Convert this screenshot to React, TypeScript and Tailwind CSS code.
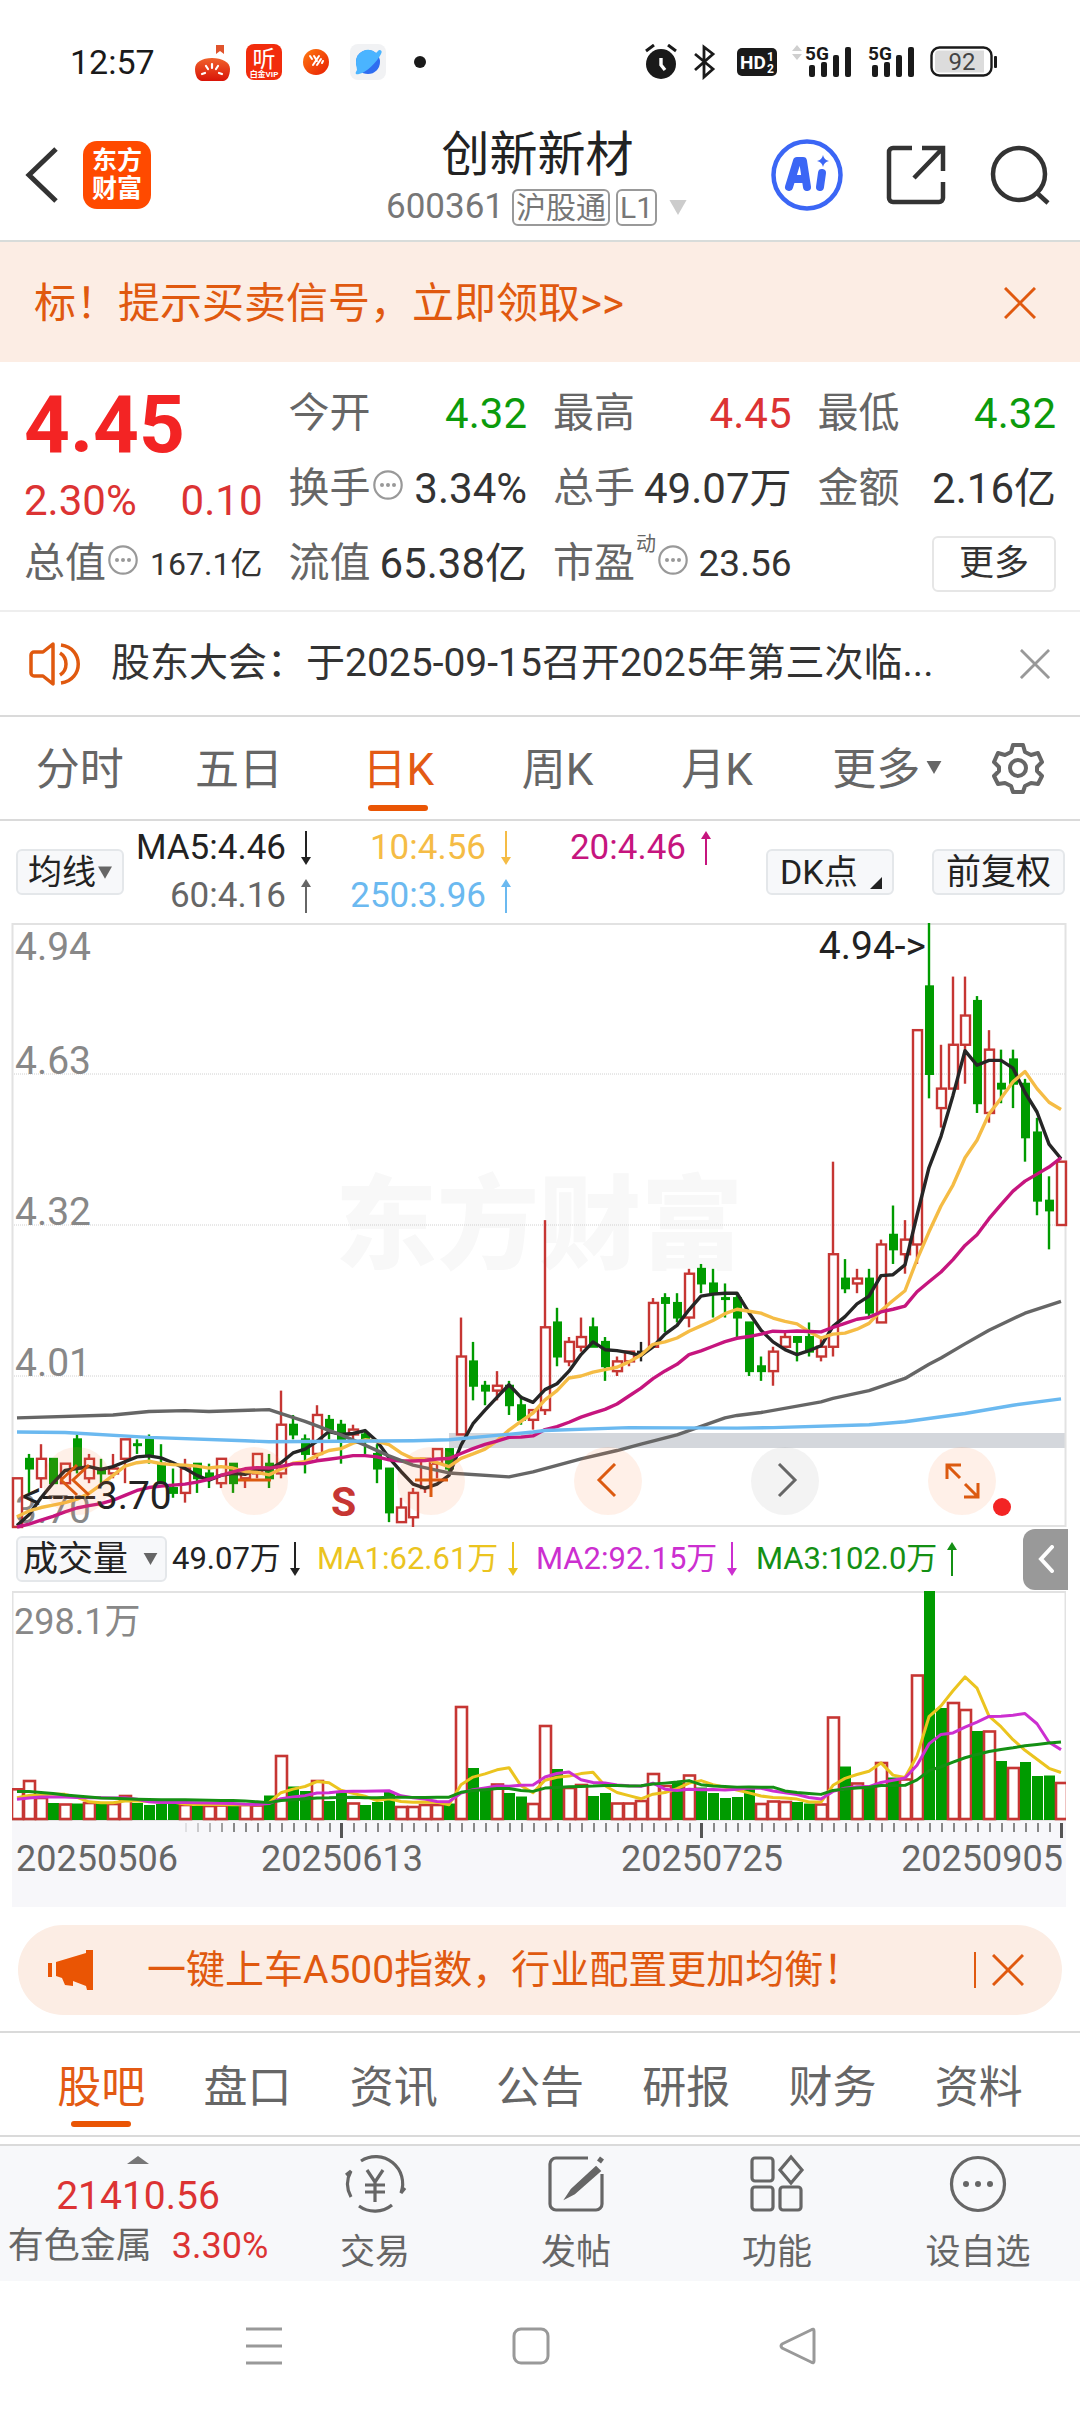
import React from 'react';

// open, high, low, close, volume bar height, volume colour flag (1 = up)
type Day = [number, number, number, number, number, number];

const days: Day[] = [
  [3.7, 3.8, 3.7, 3.8, 31.7, 1],
  [3.84, 3.85, 3.77, 3.82, 40, 1],
  [3.8, 3.87, 3.78, 3.84, 23, 1],
  [3.84, 3.84, 3.79, 3.79, 17, 0],
  [3.79, 3.83, 3.79, 3.83, 16.5, 1],
  [3.88, 3.89, 3.81, 3.82, 16.5, 0],
  [3.8, 3.85, 3.79, 3.84, 18, 1],
  [3.82, 3.84, 3.79, 3.81, 18, 0],
  [3.81, 3.85, 3.8, 3.82, 17, 1],
  [3.84, 3.88, 3.79, 3.88, 25, 1],
  [3.87, 3.88, 3.85, 3.87, 17, 0],
  [3.88, 3.89, 3.83, 3.85, 15, 0],
  [3.83, 3.87, 3.79, 3.79, 16, 0],
  [3.78, 3.82, 3.76, 3.77, 16.5, 0],
  [3.77, 3.84, 3.75, 3.82, 16, 1],
  [3.83, 3.83, 3.77, 3.8, 14, 0],
  [3.81, 3.83, 3.78, 3.8, 15, 1],
  [3.79, 3.84, 3.78, 3.84, 15.5, 1],
  [3.83, 3.83, 3.77, 3.79, 15.5, 0],
  [3.8, 3.81, 3.78, 3.81, 16, 1],
  [3.81, 3.85, 3.8, 3.85, 15.5, 1],
  [3.83, 3.85, 3.78, 3.8, 24.5, 0],
  [3.81, 3.98, 3.8, 3.91, 65, 1],
  [3.91, 3.93, 3.88, 3.89, 33.5, 0],
  [3.88, 3.89, 3.81, 3.85, 29, 0],
  [3.85, 3.95, 3.84, 3.93, 40, 1],
  [3.92, 3.93, 3.88, 3.9, 19, 0],
  [3.91, 3.92, 3.83, 3.88, 27.5, 0],
  [3.89, 3.91, 3.88, 3.9, 17.5, 1],
  [3.89, 3.9, 3.85, 3.88, 15, 0],
  [3.85, 3.87, 3.79, 3.82, 18, 0],
  [3.82, 3.82, 3.71, 3.73, 28, 0],
  [3.71, 3.76, 3.71, 3.74, 14, 1],
  [3.72, 3.78, 3.7, 3.77, 14, 1],
  [3.78, 3.84, 3.77, 3.84, 16, 1],
  [3.83, 3.86, 3.8, 3.86, 16, 1],
  [3.86, 3.86, 3.81, 3.82, 16.5, 0],
  [3.89, 4.13, 3.89, 4.05, 114, 1],
  [4.04, 4.08, 3.96, 3.99, 52, 0],
  [3.99, 4.0, 3.95, 3.98, 32, 0],
  [3.98, 4.02, 3.96, 3.99, 36.5, 1],
  [3.99, 4.0, 3.93, 3.95, 27, 0],
  [3.95, 3.97, 3.91, 3.92, 23.5, 0],
  [3.92, 3.94, 3.9, 3.94, 17, 1],
  [3.94, 4.33, 3.93, 4.11, 95, 1],
  [4.12, 4.15, 4.03, 4.05, 51, 0],
  [4.04, 4.09, 4.03, 4.08, 33, 1],
  [4.07, 4.13, 4.06, 4.09, 36, 1],
  [4.11, 4.13, 4.07, 4.07, 24, 0],
  [4.08, 4.09, 4.0, 4.03, 27, 0],
  [4.02, 4.05, 4.01, 4.04, 17.5, 1],
  [4.04, 4.06, 4.03, 4.06, 17.5, 1],
  [4.06, 4.08, 4.04, 4.06, 20, 1],
  [4.07, 4.17, 4.07, 4.16, 47, 1],
  [4.17, 4.18, 4.1, 4.16, 35, 1],
  [4.16, 4.18, 4.12, 4.13, 37, 0],
  [4.13, 4.23, 4.11, 4.22, 45.5, 1],
  [4.23, 4.24, 4.18, 4.2, 32.5, 0],
  [4.2, 4.23, 4.13, 4.18, 27, 0],
  [4.17, 4.2, 4.13, 4.17, 22, 0],
  [4.17, 4.18, 4.09, 4.13, 23, 0],
  [4.12, 4.12, 4.01, 4.02, 31, 0],
  [4.03, 4.05, 4.0, 4.02, 17, 1],
  [4.02, 4.07, 3.99, 4.06, 19.5, 1],
  [4.07, 4.1, 4.07, 4.09, 19, 1],
  [4.09, 4.09, 4.04, 4.08, 18, 0],
  [4.09, 4.12, 4.05, 4.06, 16.5, 0],
  [4.05, 4.09, 4.04, 4.07, 16.5, 1],
  [4.07, 4.45, 4.05, 4.26, 103.5, 1],
  [4.21, 4.25, 4.18, 4.19, 53.5, 0],
  [4.2, 4.23, 4.18, 4.21, 37.5, 1],
  [4.21, 4.23, 4.13, 4.14, 33, 0],
  [4.12, 4.29, 4.12, 4.28, 58, 1],
  [4.3, 4.36, 4.24, 4.27, 42.5, 0],
  [4.26, 4.33, 4.22, 4.29, 41.5, 1],
  [4.28, 4.72, 4.24, 4.72, 145.5, 1],
  [4.81, 4.94, 4.58, 4.63, 229, 0],
  [4.56, 4.69, 4.52, 4.6, 112, 0],
  [4.6, 4.83, 4.6, 4.69, 118, 1],
  [4.69, 4.83, 4.61, 4.75, 111, 1],
  [4.78, 4.79, 4.55, 4.57, 89, 0],
  [4.55, 4.72, 4.53, 4.68, 89.5, 1],
  [4.61, 4.68, 4.57, 4.6, 59, 0],
  [4.66, 4.68, 4.56, 4.61, 53, 1],
  [4.61, 4.62, 4.45, 4.5, 58, 0],
  [4.51, 4.54, 4.34, 4.37, 44, 0],
  [4.37, 4.42, 4.27, 4.35, 44.5, 0],
  [4.32, 4.45, 4.32, 4.45, 38, 1],
];

// open equals close on these days
const DOJI = 52;
const GREEN_DOJI = [10, 59];

const RED = '#c63633';
const GREEN = '#009b00';

const xAt = (i: number) => 5 + i * 12;
const yAt = (p: number) => 604 - (p - 3.7) * 487.1;

// averages before the window is long enough come from the lead values
const average = (values: number[], n: number, lead: number[]) =>
  values.map((_, i) =>
    i < n - 1 ? lead[i] : values.slice(i - n + 1, i + 1).reduce((a, b) => a + b, 0) / n
  );

const closes = days.map((d) => d[3]);
const volumes = days.map((d) => d[4]);

const ma5 = average(closes, 5, [3.703, 3.725, 3.76, 3.79]);
const ma10 = average(closes, 10, [3.721, 3.733, 3.74, 3.745, 3.75, 3.757, 3.769, 3.787, 3.806]);
const ma20 = average(closes, 20, [
  3.7, 3.706, 3.714, 3.722, 3.731, 3.739, 3.744, 3.748, 3.755, 3.765, 3.775, 3.781, 3.784, 3.786,
  3.788, 3.792, 3.798, 3.806, 3.813,
]);
const ma60: [number, number][] = [
  [0, 3.924], [8, 3.93], [11, 3.937], [14, 3.939], [16, 3.937], [21, 3.941], [24, 3.917],
  [27, 3.889], [29, 3.868], [31, 3.846], [33, 3.827], [36, 3.811], [41, 3.803], [43, 3.813],
  [47, 3.84], [50, 3.857], [52, 3.87], [55, 3.889], [59, 3.924], [60, 3.929], [62, 3.935],
  [67, 3.957], [68, 3.964], [71, 3.98], [74, 4.005], [76, 4.034], [77, 4.047], [79, 4.076],
  [81, 4.104], [84, 4.139], [87, 4.163],
];
const ma250: [number, number][] = [
  [0, 3.895], [4, 3.894], [11, 3.884], [19, 3.877], [21, 3.875], [33, 3.877], [36, 3.879],
  [43, 3.895], [44, 3.898], [51, 3.904], [60, 3.903], [63, 3.904], [71, 3.91], [74, 3.916],
  [79, 3.933], [83, 3.95], [87, 3.963],
];

const vol5 = average(volumes, 5, [22.3, 24.5, 25, 26]);
const vol10 = average(volumes, 10, [20.7, 22, 23, 23, 23, 22.5, 22.3, 22.2, 22]);
const vol20 = average(volumes, 20, [
  28.5, 28.5, 27.5, 26.5, 25, 24, 23, 22, 21.7, 21.3, 20.8, 20.5, 20.3, 20.2, 20.2, 20, 19.8, 19.5,
  19.4,
]);

const priceLine = (values: number[]) => values.map((v, i) => `${xAt(i)},${yAt(v)}`).join(' ');
const pointLine = (points: [number, number][]) =>
  points.map(([i, v]) => `${xAt(i)},${yAt(v)}`).join(' ');
const volumeLine = (values: number[]) => values.map((v, i) => `${xAt(i)},${229 - v}`).join(' ');

const Candle = ({ day, i }: { day: Day; i: number }) => {
  const [open, high, low, close] = day;
  const x = xAt(i);
  const up = close >= open && !GREEN_DOJI.includes(i);
  const top = yAt(Math.max(open, close));
  const bottom = yAt(Math.min(open, close));
  const colour = i === DOJI ? '#222' : up ? RED : GREEN;
  return (
    <g stroke={colour} strokeWidth={2.4} fill={colour}>
      <line x1={x} x2={x} y1={yAt(high)} y2={top} />
      <line x1={x} x2={x} y1={bottom} y2={yAt(low)} />
      {up && i !== DOJI ? (
        <rect x={x - 4} y={top} width={9} height={Math.max(bottom - top, 2)} fill="none" />
      ) : (
        <rect x={x - 4} y={top - 1} width={9} height={Math.max(bottom - top + 2, 3)} stroke="none" />
      )}
    </g>
  );
};

const PriceChart = () => (
  <svg viewBox="0 0 1054 604" className="block h-auto w-full overflow-visible">
    <text x={527} y={338} fontSize={102} fontWeight={900} fill="#f8f8f8" textAnchor="middle">
      东方财富
    </text>
    {[151, 302, 453].map((y) => (
      <line key={y} x1={0} x2={1054} y1={y} y2={y} stroke="#d0d0d0" strokeDasharray="1 1" />
    ))}
    <rect x={437} y={510} width={617} height={15} fill="#d4d7dc" />
    <rect x={0.5} y={1} width={1053} height={602} fill="none" stroke="#e2e2e2" strokeWidth={2} />
    <g fontSize={39} fill="#888">
      <text x={3} y={37}>4.94</text>
      <text x={3} y={151}>4.63</text>
      <text x={3} y={302}>4.32</text>
      <text x={3} y={453}>4.01</text>
      <text x={3} y={600}>3.70</text>
    </g>
    {days.map((day, i) => (
      <Candle key={i} day={day} i={i} />
    ))}
    <g fill="none" strokeWidth={3.4} strokeLinejoin="round">
      <polyline points={priceLine(ma5)} stroke="#262626" />
      <polyline points={priceLine(ma10)} stroke="#f5bc45" />
      <polyline points={priceLine(ma20)} stroke="#c6157e" />
      <polyline points={pointLine(ma60)} stroke="#666" />
      <polyline points={pointLine(ma250)} stroke="#6bb9f0" />
    </g>
    <text x={914} y={36} fontSize={39} fill="#222" textAnchor="end">4.94-&gt;</text>
    <text x={10} y={586} fontSize={39} fill="#222">&lt;-----3.70</text>
    <text x={319} y={593} fontSize={41} fontWeight={700} fill={RED}>S</text>
  </svg>
);

const VolumeChart = () => (
  <svg viewBox="0 0 1054 230" className="block h-auto w-full">
    <rect x={0.5} y={1} width={1053} height={228} fill="none" stroke="#e2e2e2" strokeWidth={2} />
    <text x={2} y={43} fontSize={36} fill="#888">298.1万</text>
    {days.map(([, , , , v, up], i) =>
      up ? (
        <rect key={i} x={xAt(i) - 5} y={230 - v} width={11} height={v - 2} fill="#fff" stroke={RED} strokeWidth={2.6} />
      ) : (
        <rect key={i} x={xAt(i) - 5} y={229 - v} width={11} height={v} fill={GREEN} />
      )
    )}
    <g fill="none" strokeWidth={3} strokeLinejoin="round">
      <polyline points={volumeLine(vol5)} stroke="#ebc41f" />
      <polyline points={volumeLine(vol10)} stroke="#cc2fd0" />
      <polyline points={volumeLine(vol20)} stroke="#149014" />
    </g>
  </svg>
);

const DateAxis = () => (
  <svg viewBox="0 0 1054 86" className="block h-auto w-full bg-[#f7f7fa]">
    {days.map((_, i) => {
      if (i < 14) return null;
      const major = i === 27 || i === 57 || i === 87;
      return (
        <rect
          key={i}
          x={xAt(i) - (major ? 1 : 0)}
          y={2}
          width={major ? 3 : 2}
          height={major ? 15 : 9}
          fill={major ? '#555' : '#888'}
          opacity={i < 18 ? (i - 13) / 5 : 1}
        />
      );
    })}
    <g fontSize={36} fill="#666">
      <text x={4} y={50}>20250506</text>
      <text x={330} y={50} textAnchor="middle">20250613</text>
      <text x={690} y={50} textAnchor="middle">20250725</text>
      <text x={1051} y={50} textAnchor="end">20250905</text>
    </g>
  </svg>
);

const Arrow = ({ up = false }: { up?: boolean }) => (
  <svg viewBox="0 0 14 34" className="h-[34px] w-[14px] shrink-0" fill="currentColor">
    {up ? <path d="M6 34V8H2L7 0l5 8H8v26z" /> : <path d="M6 0v26H2l5 8 5-8H8V0z" />}
  </svg>
);

const Close = ({ className }: { className: string }) => (
  <svg viewBox="0 0 32 32" className={className} fill="none" stroke="currentColor" strokeWidth={3}>
    <path d="M1 1l30 30M31 1L1 31" />
  </svg>
);

const Caret = ({ className }: { className: string }) => (
  <svg viewBox="0 0 16 14" className={className} fill="currentColor">
    <path d="M0 0h16L8 14z" />
  </svg>
);

const More = () => (
  <svg viewBox="0 0 30 30" className="mb-[8px] ml-[2px] h-[30px] w-[30px] shrink-0" fill="none" stroke="#999" strokeWidth={2.2}>
    <circle cx={15} cy={15} r={13.7} />
    <g fill="#999" stroke="none">
      <circle cx={9} cy={15} r={2} />
      <circle cx={15} cy={15} r={2} />
      <circle cx={21} cy={15} r={2} />
    </g>
  </svg>
);

const Signal = () => (
  <svg viewBox="0 0 48 34" className="h-[34px] w-[48px] overflow-visible" fill="#1a1a1a">
    <text x={0} y={15} fontSize={19} fontWeight={700}>5G</text>
    <rect x={4} y={20} width={6} height={12} rx={2} />
    <rect x={16} y={17} width={6} height={15} rx={2} />
    <rect x={28} y={10} width={6} height={22} rx={2} />
    <rect x={40} y={2} width={6} height={30} rx={2} />
  </svg>
);

const StatusBar = () => (
  <div className="flex h-[124px] items-center pl-[70px] pr-[82px] text-[#1a1a1a]">
    <span className="w-[123px] text-[34px]">12:57</span>
    <svg viewBox="0 0 236 40" className="h-[40px] w-[236px]">
      <defs>
        <linearGradient id="tomato" x1="0" y1="0" x2="0" y2="1">
          <stop offset="0" stopColor="#f0622b" />
          <stop offset="1" stopColor="#d91408" />
        </linearGradient>
        <linearGradient id="ball" x1="0" y1="0" x2="1" y2="1">
          <stop offset="0" stopColor="#ff7a10" />
          <stop offset="1" stopColor="#e81d04" />
        </linearGradient>
      </defs>
      <path d="M23 3h8v9l-4-3-4 3z" fill="#e0532c" />
      <path d="M2 27C2 20 9 16 19 16s18 4 18 11c0 7-3 12-7 12H9c-4 0-7-5-7-12z" fill="url(#tomato)" />
      <path d="M19 22v4M13 24l2 3M25 24l-2 3M9 32l3-1M29 32l-3-1" stroke="#fff" strokeWidth={2.2} strokeLinecap="round" />
      <rect x={53} y={2} width={36} height={36} rx={8} fill="#f22c0c" />
      <text x={71} y={25} fontSize={23} fill="#fff" textAnchor="middle">听</text>
      <text x={71} y={35} fontSize={8} fontWeight={700} fill="#fff" textAnchor="middle">白金VIP</text>
      <circle cx={123} cy={20} r={13} fill="url(#ball)" />
      <path d="M117 14l2 3M121 14l3 5M120 23l6-9M124 23l4-6M129 21l1-2" stroke="#fff" strokeWidth={2} strokeLinecap="round" />
      <rect x={157} y={2} width={36} height={36} rx={8} fill="#f1f2f4" />
      <circle cx={175} cy={20} r={12} fill="#2f6df0" />
      <path d="M163 21a12 12 0 0 1 20-10l3-3q4 0 2 4C184 20 174 30 166 32c-4 1-4-1-2-4z" fill="#4ab4ff" />
      <circle cx={227} cy={20} r={6} fill="#1a1a1a" />
    </svg>
    <div className="ml-auto flex items-center">
      <svg viewBox="0 0 34 36" className="mr-[15px] h-[36px] w-[34px]">
        <circle cx={17} cy={20} r={15} fill="#1a1a1a" />
        <path d="M2 7l8-6M32 7l-8-6" stroke="#1a1a1a" strokeWidth={3} />
        <path d="M17 14v7l4 5" stroke="#fff" strokeWidth={3.4} fill="none" />
      </svg>
      <svg viewBox="0 0 24 36" className="mr-[20px] h-[36px] w-[24px]" fill="none" stroke="#1a1a1a" strokeWidth={2.8}>
        <path d="M2 10l18 15-9 8V3l9 7L2 26" />
      </svg>
      <svg viewBox="0 0 40 28" className="mr-[14px] h-[28px] w-[40px]">
        <rect width={40} height={28} rx={5} fill="#1a1a1a" />
        <text x={3} y={21} fontSize={19} fontWeight={700} fill="#fff">HD</text>
        <text x={30} y={13} fontSize={12} fontWeight={700} fill="#fff">1</text>
        <text x={30} y={25} fontSize={12} fontWeight={700} fill="#fff">2</text>
      </svg>
      <svg viewBox="0 0 12 34" className="mr-[2px] h-[34px] w-[12px]" fill="#cfcfcf">
        <path d="M1 6l5-6 5 6zM1 9h10l-5 6z" />
      </svg>
      <Signal />
      <span className="w-[15px]" />
      <Signal />
      <svg viewBox="0 0 68 32" className="ml-[14px] h-[32px] w-[68px]">
        <rect x={1.5} y={1.5} width={60} height={28} rx={8} fill="#fff" stroke="#1a1a1a" strokeWidth={2.4} />
        <path d="M9 4.500h45v22H9a4 4 0 0 1-4-4v-14a4 4 0 0 1 4-4z" fill="#dcdcdc" />
        <rect x={64} y={10} width={3} height={12} rx={1} fill="#1a1a1a" />
        <text x={32} y={24} fontSize={24} fill="#444" textAnchor="middle">92</text>
      </svg>
    </div>
  </div>
);

const Header = () => (
  <header className="flex h-[118px] items-center justify-between border-b-2 border-[#d8dcda] pl-[25px] pr-[30px] pb-[15px]">
    <div className="flex w-[306px] items-center gap-[24px]">
      <button aria-label="返回">
        <svg viewBox="0 0 34 56" className="h-[56px] w-[34px]" fill="none" stroke="#333" strokeWidth={5}>
          <path d="M31 2L4 28l27 26" />
        </svg>
      </button>
      <div className="flex h-[68px] w-[68px] flex-col items-center justify-center rounded-[14px] bg-[#ff4a00] text-[25px] font-bold leading-[28px] text-white">
        <span>东方</span>
        <span>财富</span>
      </div>
    </div>
    <div className="flex flex-col items-center pt-[4px]">
      <h1 className="text-[48px] leading-[62px] text-[#222]">创新新材</h1>
      <button className="flex h-[44px] items-center text-[#777]">
        <span className="mr-[8px] text-[35px]">600361</span>
        <span className="mr-[6px] rounded-[6px] border-2 border-[#999] px-[2px] text-[30px] leading-[33px]">沪股通</span>
        <span className="mr-[10px] rounded-[6px] border-2 border-[#999] px-[2px] text-[30px] leading-[33px]">L1</span>
        <Caret className="h-[15px] w-[22px] text-[#ccc]" />
      </button>
    </div>
    <div className="flex w-[306px] items-center justify-end">
      <button aria-label="AI" className="mr-[42px]">
        <svg viewBox="0 0 74 74" className="h-[74px] w-[74px]" fill="#3b66f5">
          <circle cx={37} cy={37} r={33.500} fill="none" stroke="#3b66f5" strokeWidth={4.500} />
          <g fill="none" stroke="#3b66f5" strokeWidth={8} strokeLinecap="round" strokeLinejoin="round">
            <path d="M19 49l8-26h6l4 26M24 41h10" />
            <path d="M52 35l-2 14" />
          </g>
          <path d="M53 17q1 5 6 6-5 1-6 6-1-5-6-6 5-1 6-6z" />
        </svg>
      </button>
      <button aria-label="分享" className="mr-[44px]">
        <svg viewBox="0 0 60 60" className="h-[60px] w-[60px]" fill="none" stroke="#333" strokeWidth={4.500}>
          <path d="M26 3H7a4 4 0 0 0-4 4v46a4 4 0 0 0 4 4h46a4 4 0 0 0 4-4V37" />
          <path d="M36 3h21v23M56 4L28 33" />
        </svg>
      </button>
      <button aria-label="搜索">
        <svg viewBox="0 0 60 60" className="h-[60px] w-[60px]" fill="none" stroke="#333" strokeWidth={4.500}>
          <circle cx={29} cy={29} r={26} />
          <path d="M47 48l11 10" />
        </svg>
      </button>
    </div>
  </header>
);

const Field = ({
  label,
  value,
  colour = 'text-[#333]',
  size = 'text-[42px]',
  info = false,
  mark,
}: {
  label: string;
  value: string;
  colour?: string;
  size?: string;
  info?: boolean;
  mark?: string;
}) => (
  <div className="flex h-[75px] items-center whitespace-nowrap">
    <span className="text-[41px] text-[#666]">{label}</span>
    {mark && <sup className="-mt-[20px] pl-[1px] text-[20px] text-[#666]">{mark}</sup>}
    {info && <More />}
    <span className={`ml-auto ${size} ${colour}`}>{value}</span>
  </div>
);

const Quote = () => (
  <section className="grid grid-cols-4 gap-[26px] border-b-2 border-[#eee] px-[24px] pb-[9px] pt-[14px]">
    <div>
      <div className="flex h-[98px] items-center text-[80px] font-bold text-[#f32424]">4.45</div>
      <div className="flex h-[52px] items-center justify-between text-[42px] text-[#dc3333]">
        <span>2.30%</span>
        <span>0.10</span>
      </div>
      <Field label="总值" value="167.1亿" size="text-[32px]" info />
    </div>
    <div>
      <Field label="今开" value="4.32" colour="text-[#0c9b0c]" />
      <Field label="换手" value="3.34%" info />
      <Field label="流值" value="65.38亿" />
    </div>
    <div>
      <Field label="最高" value="4.45" colour="text-[#dc3333]" />
      <Field label="总手" value="49.07万" />
      <Field label="市盈" value="23.56" size="text-[37px]" mark="动" info />
    </div>
    <div>
      <Field label="最低" value="4.32" colour="text-[#0c9b0c]" />
      <Field label="金额" value="2.16亿" />
      <div className="flex h-[75px] items-center justify-end">
        <button className="h-[56px] w-[124px] rounded-[6px] border-2 border-[#e6e6e6] text-[35px] leading-none text-[#333]">
          更多
        </button>
      </div>
    </div>
  </section>
);

const periods = ['分时', '五日', '日K', '周K', '月K', '更多'];

const PeriodTabs = () => (
  <nav className="flex h-[104px] border-b-2 border-[#dadada] text-[44px] text-[#666]">
    {periods.map((p) => (
      <button
        key={p}
        className={`relative flex flex-1 items-center justify-center pt-[4px] ${p === '日K' ? 'text-[#e35a14]' : ''}`}
      >
        {p}
        {p === '日K' && <span className="absolute bottom-[8px] h-[6px] w-[60px] rounded-full bg-[#ea5504]" />}
        {p === '更多' && <Caret className="absolute right-[14px] top-[44px] h-[13px] w-[16px]" />}
      </button>
    ))}
    <button aria-label="设置" className="flex w-[124px] items-center justify-center">
      <svg viewBox="0 0 52 52" className="h-[52px] w-[52px]" fill="none" stroke="#666" strokeWidth={4} strokeLinejoin="round">
        <path d="M21 3h10l2 7 6 3 7-2 4 9-5 5v4l5 5-4 8-7-1-6 3-2 6H21l-2-6-6-3-7 1-4-8 5-5v-4l-5-5 4-9 7 2 6-3z" />
        <circle cx={26} cy={26} r={8} />
      </svg>
    </button>
  </nav>
);

const MovingAverages = () => (
  <section className="flex h-[102px] items-center whitespace-nowrap pl-[16px] pr-[15px] text-[34px] text-[#222]">
    <button className="flex h-[46px] w-[108px] shrink-0 items-center justify-center gap-[2px] rounded-[6px] border-2 border-[#e4e7ea] bg-[#f7f8fa]">
      <span className="leading-none">均线</span>
      <Caret className="h-[13px] w-[14px] text-[#666]" />
    </button>
    <div className="-ml-[11px] grid w-[600px] grid-cols-3 text-[35px] leading-[48px]">
      <span className="flex items-center justify-end gap-[13px]">MA5:4.46 <Arrow /></span>
      <span className="flex items-center justify-end gap-[13px] text-[#f5bc45]">10:4.56 <Arrow /></span>
      <span className="flex items-center justify-end gap-[13px] text-[#c6157e]">20:4.46 <Arrow up /></span>
      <span className="flex items-center justify-end gap-[13px] text-[#666]">60:4.16 <Arrow up /></span>
      <span className="flex items-center justify-end gap-[13px] text-[#6bb9f0]">250:3.96 <Arrow up /></span>
    </div>
    <button className="ml-auto flex h-[46px] w-[128px] items-center gap-[12px] rounded-[6px] border-2 border-[#e4e7ea] bg-[#f7f8fa] pl-[12px]">
      <span className="leading-none">DK点</span>
      <svg viewBox="0 0 12 12" className="mt-[22px] h-[12px] w-[12px]" fill="#222">
        <path d="M12 0v12H0z" />
      </svg>
    </button>
    <button className="ml-[38px] h-[46px] w-[133px] rounded-[6px] border-2 border-[#e4e7ea] bg-[#f7f8fa] text-[35px] leading-none">
      前复权
    </button>
  </section>
);

const chartTools = [
  { name: '最左', d: 'M17 2L1 17l16 15M29 2L13 17l16 15', grey: false },
  { name: '缩小', d: 'M1 17h33', grey: false },
  { name: '放大', d: 'M1 17h33M17 1v33', grey: false },
  { name: '左移', d: 'M24 1L8 17l16 16', grey: false },
  { name: '右移', d: 'M11 1l16 16-16 16', grey: true },
  { name: '全屏', d: 'M2 16V2h14M3 3l12 12M33 20v14H19M32 33L20 21', grey: false },
];

const ChartTools = () => (
  <div className="absolute bottom-[12px] left-[31px] right-[70px] flex justify-between">
    {chartTools.map(({ name, d, grey }) => (
      <button
        key={name}
        aria-label={name}
        className={`flex h-[68px] w-[68px] items-center justify-center rounded-full ${
          grey ? 'bg-[#999999]/12 text-[#666]' : 'bg-[#ff8040]/12 text-[#dc5a10]'
        }`}
      >
        <svg viewBox="0 0 35 36" className="h-[36px] w-[35px]" fill="none" stroke="currentColor" strokeWidth={3}>
          <path d={d} />
        </svg>
      </button>
    ))}
    <span className="absolute bottom-[-1px] right-[-15px] h-[18px] w-[18px] rounded-full bg-[#f32424]" />
  </div>
);

const VolumeHeader = () => (
  <div className="flex h-[64px] items-center whitespace-nowrap pl-[16px] pr-[12px] text-[31px]">
    <button className="flex h-[46px] w-[151px] items-center justify-between rounded-[6px] border-2 border-[#e4e7ea] bg-[#f7f8fa] pl-[5px] pr-[7px] text-[35px] text-[#222]">
      <span className="leading-none">成交量</span>
      <Caret className="h-[12px] w-[15px] text-[#666]" />
    </button>
    <span className="ml-[5px] flex w-[145px] items-center gap-[7px] text-[#222]">49.07万 <Arrow /></span>
    <span className="flex w-[219px] items-center gap-[8px] text-[#ebc41f]">MA1:62.61万 <Arrow /></span>
    <span className="flex w-[220px] items-center gap-[8px] text-[#cc2fd0]">MA2:92.15万 <Arrow /></span>
    <span className="flex items-center gap-[8px] text-[#149014]">MA3:102.0万 <Arrow up /></span>
    <button aria-label="展开" className="ml-auto flex h-[61px] w-[45px] items-center justify-center rounded-l-[12px] bg-[#999]">
      <svg viewBox="0 0 16 28" className="h-[28px] w-[16px]" fill="none" stroke="#fff" strokeWidth={4} strokeLinecap="round">
        <path d="M14 2L3 14l11 12" />
      </svg>
    </button>
  </div>
);

const sections = ['股吧', '盘口', '资讯', '公告', '研报', '财务', '资料'];

const actions = [
  {
    label: '交易',
    icon: (
      <>
        <path d="M16 7a27 27 0 0 1 40 32l4-5M47 51A27 27 0 0 1 14 52M6 43A27 27 0 0 1 6 17l-5 4" />
        <path d="M22 16l8 12 8-12M30 28v20M20 31h20M20 38h20" />
      </>
    ),
  },
  {
    label: '发帖',
    icon: (
      <>
        <path d="M42 4H10a6 6 0 0 0-6 6v40a6 6 0 0 0 6 6h40a6 6 0 0 0 6-6V20" />
        <path d="M50 14L26 36l-4 6 6-3 25-22z" fill="currentColor" />
        <path d="M53 8l3-4" strokeWidth={5} />
      </>
    ),
  },
  {
    label: '功能',
    icon: (
      <>
        <rect x={5} y={4} width={21} height={23} rx={3} />
        <rect x={5} y={33} width={21} height={23} rx={3} />
        <rect x={33} y={33} width={21} height={23} rx={3} />
        <path d="M44 3l11 13-11 13-11-13z" />
      </>
    ),
  },
  {
    label: '设自选',
    icon: (
      <>
        <circle cx={30} cy={30} r={26.500} />
        <g fill="currentColor" stroke="none">
          <circle cx={18} cy={30} r={3} />
          <circle cx={30} cy={30} r={3} />
          <circle cx={42} cy={30} r={3} />
        </g>
      </>
    ),
  },
];

const BottomBar = () => (
  <footer className="flex h-[137px] border-t-2 border-[#dadada] bg-[#f7f8fa] text-[#666]">
    <button className="flex w-[276px] flex-col items-center whitespace-nowrap pt-[10px]">
      <svg viewBox="0 0 22 8" className="h-[8px] w-[22px]" fill="#777">
        <path d="M0 8L11 0l11 8z" />
      </svg>
      <span className="mt-[7px] text-[39px] leading-[50px] text-[#dc3333]">21410.56</span>
      <span className="flex gap-[20px] text-[36px] leading-[50px]">
        有色金属 <span className="text-[#dc3333]">3.30%</span>
      </span>
    </button>
    {actions.map(({ label, icon }) => (
      <button key={label} className="flex flex-1 flex-col items-center pr-[3px] pt-[8px]">
        <svg viewBox="0 0 60 60" className="h-[60px] w-[60px] overflow-visible" fill="none" stroke="currentColor" strokeWidth={3.200}>
          {icon}
        </svg>
        <span className="mt-[16px] text-[35px] leading-[46px]">{label}</span>
      </button>
    ))}
  </footer>
);

const SystemNav = () => (
  <nav className="flex h-[130px] items-center justify-center pr-[19px] text-[#999]">
    <button aria-label="最近任务" className="flex w-[267px] justify-center">
      <svg viewBox="0 0 38 38" className="h-[38px] w-[38px]" stroke="currentColor" strokeWidth={3}>
        <path d="M1 2h36M1 19h36M1 36h36" />
      </svg>
    </button>
    <button aria-label="主页" className="flex w-[267px] justify-center">
      <svg viewBox="0 0 38 38" className="h-[38px] w-[38px]" fill="none" stroke="currentColor" strokeWidth={3}>
        <rect x={2} y={2} width={34} height={34} rx={7} />
      </svg>
    </button>
    <button aria-label="后退" className="flex w-[267px] justify-center">
      <svg viewBox="0 0 38 38" className="h-[38px] w-[38px]" fill="none" stroke="currentColor" strokeWidth={3} strokeLinejoin="round">
        <path d="M35 4v30q0 3-3 1L3 21q-2-2 0-4L32 3q3-2 3 1z" />
      </svg>
    </button>
  </nav>
);

const App: React.FC = () => {
  return (
    <div className="min-h-screen bg-white font-[Roboto,'Noto_Sans_CJK_SC',sans-serif]">
      <StatusBar />
      <Header />
      <div className="flex h-[120px] items-center justify-between bg-[#fcede4] pl-[34px] pr-[44px] pt-[2px] text-[42px] text-[#e0590f]">
        <span className="whitespace-nowrap">标！提示买卖信号，立即领取&gt;&gt;</span>
        <button aria-label="关闭">
          <Close className="h-[32px] w-[32px]" />
        </button>
      </div>
      <Quote />
      <div className="flex h-[105px] items-center border-b-2 border-[#dadada] pl-[28px] pr-[30px]">
        <svg viewBox="0 0 54 44" className="h-[44px] w-[54px]" fill="none" stroke="#e0590f" strokeWidth={3.500} strokeLinejoin="round">
          <path d="M25 2L15 10H6a3 3 0 0 0-3 3v18a3 3 0 0 0 3 3h9l10 8z" />
          <path d="M32 11c8 5 8 17 0 22M33 3c23 3 23 35 0 38" />
        </svg>
        <a href="#notice" className="ml-[29px] whitespace-nowrap text-[39px] text-[#333]">
          股东大会：于2025-09-15召开2025年第三次临...
        </a>
        <button aria-label="关闭公告" className="ml-auto text-[#999]">
          <Close className="h-[30px] w-[30px]" />
        </button>
      </div>
      <PeriodTabs />
      <MovingAverages />
      <div className="relative ml-[12px] mr-[14px]">
        <PriceChart />
        <ChartTools />
      </div>
      <VolumeHeader />
      <div className="ml-[12px] mr-[14px]">
        <VolumeChart />
        <DateAxis />
      </div>
      <div className="mx-[18px] mb-[16px] mt-[18px] flex h-[90px] items-center rounded-full bg-[#fcede4] pl-[30px] pr-[38px] text-[#e0590f]">
        <svg viewBox="0 0 46 40" className="h-[40px] w-[46px]" fill="#ea5504">
          <path d="M0 13h4v14H0zM8 12l30-9V0h7v40h-6l-1-4-13-5v5l-8-1-3-7-6-2z" />
        </svg>
        <a href="#etf" className="ml-[53px] whitespace-nowrap text-[39px]">
          一键上车A500指数，行业配置更加均衡！
        </a>
        <button aria-label="关闭推广" className="ml-auto flex items-center gap-[16px]">
          <span className="h-[36px] w-[2px] bg-[#e0590f]" />
          <Close className="h-[32px] w-[32px]" />
        </button>
      </div>
      <nav className="mb-[7px] flex h-[106px] border-y-2 border-[#dadada] px-[28px] text-[44px] text-[#666]">
        {sections.map((s) => (
          <button
            key={s}
            className={`relative flex flex-1 items-center justify-center pt-[8px] ${s === '股吧' ? 'text-[#e35a14]' : ''}`}
          >
            {s}
            {s === '股吧' && <span className="absolute bottom-[8px] h-[6px] w-[60px] rounded-full bg-[#ea5504]" />}
          </button>
        ))}
      </nav>
      <BottomBar />
      <SystemNav />
    </div>
  );
};

export default App;
